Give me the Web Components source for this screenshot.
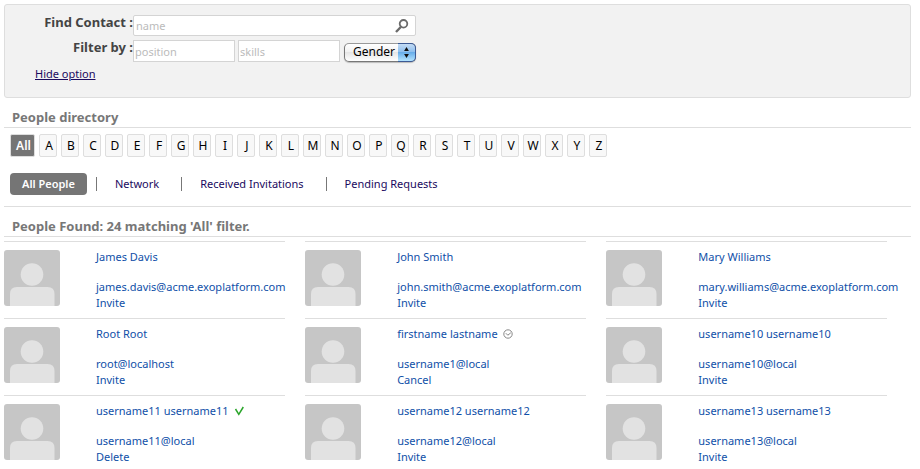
<!DOCTYPE html>
<html lang="en">
<head>
<meta charset="utf-8">
<title>People directory</title>
<style>
body{
    margin: 4px 9px 0 4px;
    background: #fff;
    color: #444;
    font-family: "Lucida Grande", "Noto Sans", sans-serif;
    font-size: 11px;
    line-height: 16px;
}
</style>
</head>
<body>
<people-directory></people-directory>

<script>
// search panel
const searchTemplate = document.createElement("template");
searchTemplate.innerHTML = `
<style>
:host{
    display: block;
    background: #f2f2f2;
    border: 1px solid #dedede;
    border-radius: 3px;
    padding: 10px 8px 15px;
}
form{
    display: grid;
    grid-template-columns: 120px 283px;
    row-gap: 4px;
}
label.title{
    font-weight: bold;
    font-size: 13px;
    line-height: 14px;
    text-align: right;
    white-space: nowrap;
}
.box, .filters{
    display: flex;
    align-items: center;
}
.filters{
    gap: 3px;
}
.box{
    box-sizing: border-box;
    height: 21px;
    background: #fff;
    border: 1px solid #d4d4d4;
    border-radius: 2px;
    padding-right: 5px;
}
input{
    box-sizing: border-box;
    min-width: 0;
    margin: 0;
    border: 0;
    background: #fff;
    padding: 0 2px;
    font: inherit;
    color: #333;
}
.box input{
    flex: 1;
    height: 19px;
    background: none;
}
.filters input{
    width: 102px;
    height: 22px;
    border: 1px solid #d4d4d4;
    padding: 1px 1px 0;
}
input::placeholder{
    color: #bbb;
    opacity: 1;
}
button{
    display: flex;
    border: 0;
    padding: 0;
    background: none;
}
.options{
    display: inline-block;
    margin: 4px 0 0 22px;
    color: #1a0a5e;
}
</style>
<form>
    <label class="title" for="name">Find Contact :</label>
    <div class="box">
        <input id="name" type="text" placeholder="name">
        <button type="button" aria-label="Search">
            <svg width="16" height="16" viewBox="0 0 16 16" fill="none" stroke="#6b6b6b">
                <circle cx="9.5" cy="5.8" r="3.8" stroke-width="1.8"/>
                <path d="M6.8 9L2 14" stroke-width="2.4"/>
            </svg>
        </button>
    </div>
    <label class="title" for="position">Filter by :</label>
    <div class="filters">
        <input id="position" type="text" placeholder="position">
        <input type="text" placeholder="skills" aria-label="skills">
        <gender-select></gender-select>
    </div>
</form>
<a class="options" href="#">Hide option</a>
`;

class PeopleSearch extends HTMLElement{
    constructor(){
        super();
        this.attachShadow({mode:'open'});
        this.shadowRoot.append(searchTemplate.content.cloneNode(true));
    }
}

// drop-down with a blue stepper on the right
const genderTemplate = document.createElement("template");
genderTemplate.innerHTML = `
<style>
:host{
    display: grid;
    flex: 1;
    margin: 2px 0 0 1px;
}
select, .arrows{
    grid-area: 1 / 1;
}
select{
    appearance: none;
    box-sizing: border-box;
    width: 100%;
    height: 19px;
    margin: 0;
    padding: 0 18px 0 8px;
    border: 1px solid #777;
    border-top-color: #999;
    border-radius: 5px;
    background: linear-gradient(#fff, #f2f2f2 45%, #e6e6e6 50%, #fff);
    box-shadow: 0 1px 1px #bbb;
    color: #000;
    font: inherit;
    font-size: 12px;
    line-height: 16px;
}
.arrows{
    justify-self: end;
    box-sizing: border-box;
    width: 18px;
    height: 19px;
    border: 1px solid #3c5a94;
    border-left: 0;
    border-radius: 0 5px 5px 0;
    background: linear-gradient(#c4dcf5, #90c0ee 45%, #68aeea 50%, #b4e4ff);
    pointer-events: none;
}
svg{
    display: block;
}
</style>
<select aria-label="Gender">
    <option>Gender</option>
    <option>Male</option>
    <option>Female</option>
</select>
<span class="arrows">
    <svg width="17" height="17" viewBox="0 0 17 17" fill="#111">
        <path d="M8.5 3l2.4 4H6.1zM8.5 14l2.4-4H6.1z"/>
    </svg>
</span>
`;

class GenderSelect extends HTMLElement{
    constructor(){
        super();
        this.attachShadow({mode:'open'});
        this.shadowRoot.append(genderTemplate.content.cloneNode(true));
    }
}

// section title with a line under it
const titleTemplate = document.createElement("template");
titleTemplate.innerHTML = `
<style>
:host{
    display: block;
    border-bottom: 1px solid #dedede;
}
h2{
    margin: 0;
    padding: 0 8px 2px;
    font-size: 13px;
    line-height: 16px;
    color: #777;
}
</style>
<h2><slot></slot></h2>
`;

class SectionTitle extends HTMLElement{
    constructor(){
        super();
        this.attachShadow({mode:'open'});
        this.shadowRoot.append(titleTemplate.content.cloneNode(true));
    }
}

// alphabet filter
const lettersTemplate = document.createElement("template");
lettersTemplate.innerHTML = `
<style>
:host{
    display: block;
    padding: 6px 6px 0;
}
nav{
    display: flex;
    flex-wrap: wrap;
    gap: 4px;
}
a{
    box-sizing: border-box;
    width: 18px;
    height: 23px;
    border: 1px solid #dedede;
    border-radius: 2px;
    background: #f8f8f8;
    color: #000;
    font-size: 12px;
    line-height: 21px;
    padding-left: 2px;
    text-align: center;
    text-decoration: none;
}
a.active{
    width: 25px;
    background: #757575;
    color: #fff;
    font-weight: 600;
}
</style>
<nav aria-label="Filter by letter"></nav>
`;

class LetterFilter extends HTMLElement{
    constructor(){
        super();
        this.attachShadow({mode:'open'});
        this.shadowRoot.append(lettersTemplate.content.cloneNode(true));

        const nav = this.shadowRoot.querySelector('nav');
        ['All', ...'ABCDEFGHIJKLMNOPQRSTUVWXYZ'].forEach((letter) => {
            const link = document.createElement('a');
            link.href = '#';
            link.textContent = letter;
            if (letter === 'All') {
                link.className = 'active';
            }
            nav.append(link);
        });
    }
}

// tabs
const tabsTemplate = document.createElement("template");
tabsTemplate.innerHTML = `
<style>
:host{
    display: block;
    padding: 16px 6px 11px;
    border-bottom: 1px solid #dedede;
}
nav{
    display: flex;
    align-items: center;
}
a{
    color: #1a0a5e;
    line-height: 14px;
    padding: 0 22px 0 18px;
    border-left: 1px solid #777;
    text-decoration: none;
}
a.active{
    margin-right: 9px;
    padding: 4px 12px;
    border: 0;
    border-radius: 4px;
    background: #757575;
    color: #fff;
    font-weight: 600;
}
</style>
<nav>
    <a class="active" href="#">All People</a>
    <a href="#">Network</a>
    <a href="#">Received Invitations</a>
    <a href="#">Pending Requests</a>
</nav>
`;

class PeopleTabs extends HTMLElement{
    constructor(){
        super();
        this.attachShadow({mode:'open'});
        this.shadowRoot.append(tabsTemplate.content.cloneNode(true));
    }
}

// one person
const cardTemplate = document.createElement("template");
cardTemplate.innerHTML = `
<style>
:host{
    display: flex;
    gap: 36px;
    border-top: 1px solid #dedede;
    padding-top: 7px;
}
.avatar{
    flex: none;
    width: 56px;
    height: 56px;
    margin-top: 1px;
    border-radius: 3px;
}
.info{
    display: flex;
    flex-direction: column;
    align-items: flex-start;
    white-space: nowrap;
}
.name{
    display: flex;
    align-items: center;
    gap: 5px;
    margin-bottom: 14px;
}
a{
    color: #0f4fa8;
    text-decoration: none;
}
.status{
    display: block;
}
</style>
<svg class="avatar" viewBox="0 0 56 56">
    <path fill="#c6c6c6" d="M0 0h56v56H0z"/>
    <circle cx="28" cy="24.500" r="11.300" fill="#e2e2e2"/>
    <path fill="#e2e2e2" d="M6 56V44q0-7 7-7h30.500q7 0 7 7v12z"/>
</svg>
<div class="info">
    <div class="name"><a href="#"></a></div>
    <a class="email"></a>
    <a class="action" href="#"></a>
</div>
`;

const statusIcons = {
    pending: `<svg class="status" width="10" height="10" viewBox="0 0 10 10" fill="none" stroke="#888">
        <circle cx="5" cy="5" r="4.2"/><path d="M2.800 4.200L4.800 6.200L7.800 3.800"/></svg>`,
    confirmed: `<svg class="status" width="11" height="10" viewBox="0 0 11 10" fill="none" stroke="#2aa52a" stroke-width="1.500">
        <path d="M1.500 3L4.800 8.300L9.300 1"/></svg>`
};

class PersonCard extends HTMLElement{
    constructor(){
        super();
        this.attachShadow({mode:'open'});
        this.shadowRoot.append(cardTemplate.content.cloneNode(true));
    }

    setPerson(person){
        const name = this.shadowRoot.querySelector('.name');
        const email = this.shadowRoot.querySelector('.email');

        name.querySelector('a').textContent = person.name;
        email.textContent = person.email;
        email.href = 'mailto:' + person.email;
        this.shadowRoot.querySelector('.action').textContent = person.action;

        if (person.status) {
            name.insertAdjacentHTML('beforeend', statusIcons[person.status]);
        }
    }
}

// whole page
const directoryTemplate = document.createElement("template");
directoryTemplate.innerHTML = `
<style>
:host{
    display: block;
}
.directory{
    margin-top: 11px;
}
.found{
    margin-top: 11px;
}
.people{
    display: grid;
    grid-template-columns: repeat(3, 31%);
    gap: 7px 20px;
    margin-top: 4px;
}
</style>
<people-search></people-search>
<section-title class="directory">People directory</section-title>
<letter-filter></letter-filter>
<people-tabs></people-tabs>
<section-title class="found">People Found: 24 matching 'All' filter.</section-title>
<div class="people"></div>
`;

const people = [
    {name: 'James Davis', email: 'james.davis@acme.exoplatform.com', action: 'Invite'},
    {name: 'John Smith', email: 'john.smith@acme.exoplatform.com', action: 'Invite'},
    {name: 'Mary Williams', email: 'mary.williams@acme.exoplatform.com', action: 'Invite'},
    {name: 'Root Root', email: 'root@localhost', action: 'Invite'},
    {name: 'firstname lastname', email: 'username1@local', action: 'Cancel', status: 'pending'},
    {name: 'username10 username10', email: 'username10@local', action: 'Invite'},
    {name: 'username11 username11', email: 'username11@local', action: 'Delete', status: 'confirmed'},
    {name: 'username12 username12', email: 'username12@local', action: 'Invite'},
    {name: 'username13 username13', email: 'username13@local', action: 'Invite'}
];

class PeopleDirectory extends HTMLElement{
    constructor(){
        super();
        this.attachShadow({mode:'open'});
        this.shadowRoot.append(directoryTemplate.content.cloneNode(true));
    }

    connectedCallback(){
        const list = this.shadowRoot.querySelector('.people');
        people.forEach((person) => {
            const card = document.createElement('person-card');
            card.setPerson(person);
            list.append(card);
        });
    }
}

customElements.define('gender-select', GenderSelect);
customElements.define('people-search', PeopleSearch);
customElements.define('section-title', SectionTitle);
customElements.define('letter-filter', LetterFilter);
customElements.define('people-tabs', PeopleTabs);
customElements.define('person-card', PersonCard);
customElements.define('people-directory', PeopleDirectory);
</script>
</body>
</html>
